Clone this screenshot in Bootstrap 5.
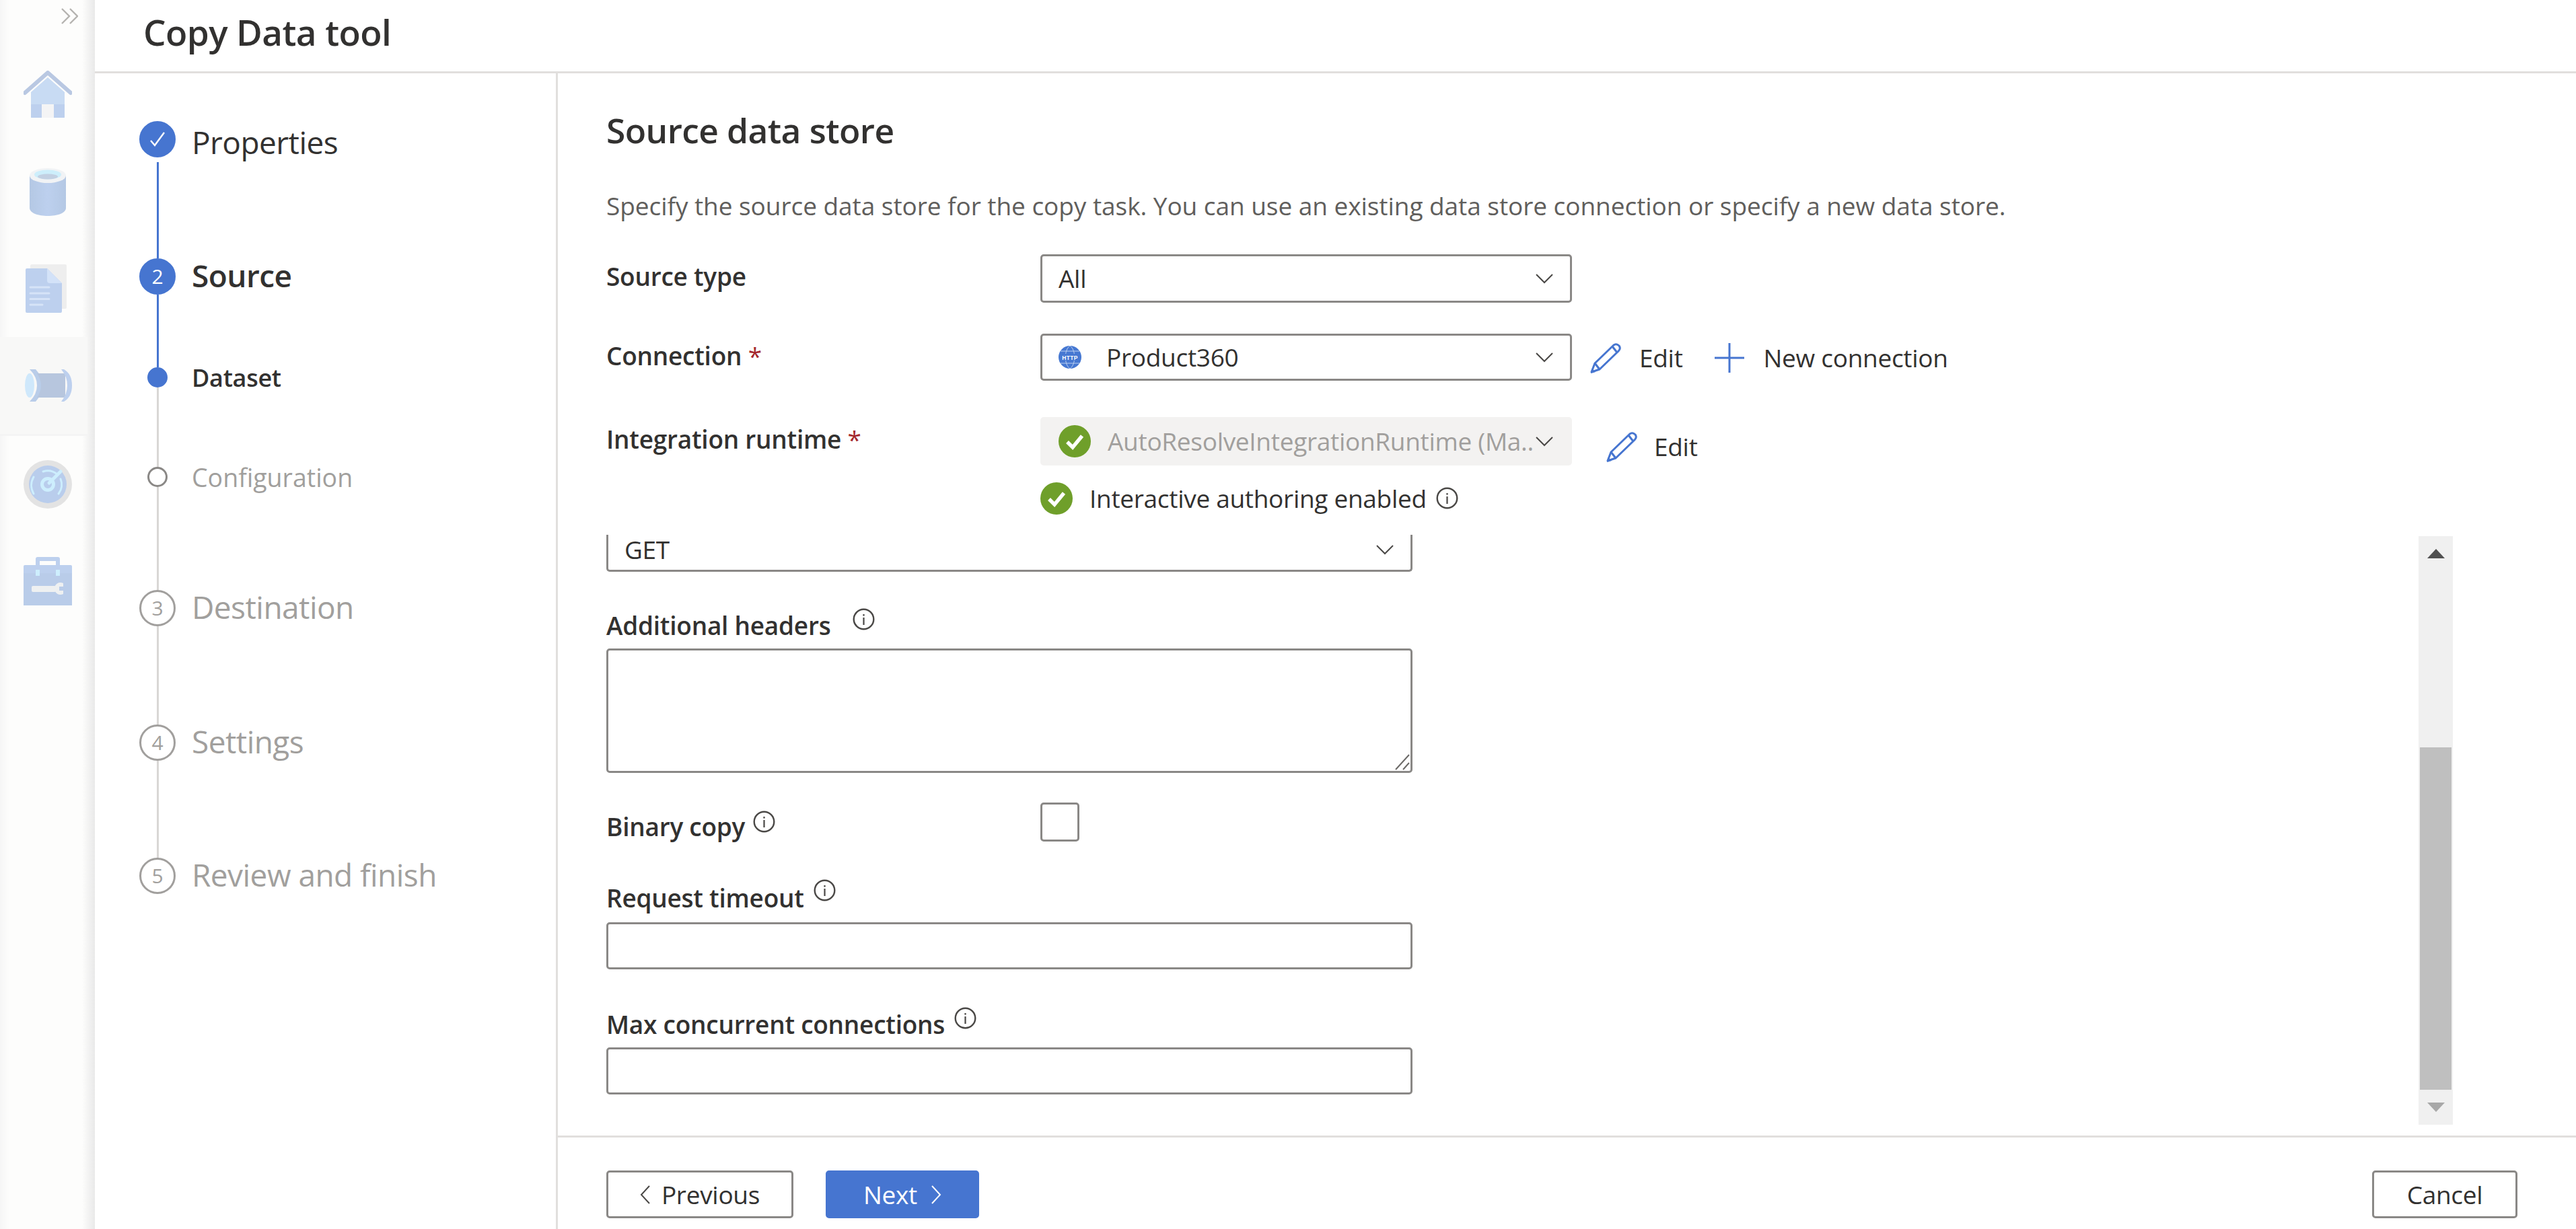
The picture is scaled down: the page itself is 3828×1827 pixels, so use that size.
<!DOCTYPE html>
<html lang="en">
<head>
<meta charset="utf-8">
<title>Copy Data tool</title>
<link href="https://cdn.jsdelivr.net/npm/bootstrap@5.3.0/dist/css/bootstrap.min.css" rel="stylesheet">
<style>
html,body{height:100%;margin:0;background:#fff;overflow:hidden}
body{font-family:"Open Sans","Noto Sans","Liberation Sans",sans-serif;color:#323130;font-size:37px;line-height:1.2}
.shell{height:1827px}
.siderail{width:141px;flex:none;padding-top:12px;background:linear-gradient(to right,#f6f6f6 0,#fdfdfc 14px,#fdfdfc 122px,#e9e9e9 141px)}
.collapse-ico{width:25px;height:24px;margin-left:91px;margin-bottom:33px;display:block;flex:none}
.rail-item{height:144px;flex:none;display:flex;align-items:center;justify-content:center}
.rail-sel{background:#f8f8f7;height:147px;margin-right:11px;padding-left:11px;border-bottom:3px solid #f4f4f4}
.rail-ico{width:72px;height:72px;display:block}
.mainpane{min-width:0}
.topbar{height:109px;border-bottom:3px solid #e1dfdd;padding:0 0 11px 72px}
.topbar h1{font-size:53px;font-weight:600;margin:0;color:#323130;letter-spacing:-.6px}
.wizard{width:688px;flex:none;border-right:3px solid #e1dfdd;padding:71px 0 0 66px}
.wstep{display:flex}
.wmark{width:54px;flex:none;display:flex;flex-direction:column;align-items:center}
.wcirc{width:54px;height:54px;border-radius:50%;flex:none;display:flex;align-items:center;justify-content:center;font-size:30px;font-weight:400;background:#fff;border:3px solid #a19f9d;color:#a19f9d}
.wcirc.on{background:#4675d0;border-color:#4675d0;color:#fff}
.wdot{width:30px;height:30px;border-radius:50%;flex:none;background:#fff;border:3px solid #8a8886}
.wdot.on{background:#4675d0;border-color:#4675d0}
.wline{width:3px;flex:1 1 auto;background:#d9d7d5}
.wline.on{background:#4675d0}
.wline.gap{margin-top:7px}
.wname{margin-left:24px;font-size:46px;line-height:54px;color:#323130;padding-top:4px;letter-spacing:-.55px}
.wname.strong{font-weight:600;padding-top:0;margin-top:-2px}
.wname.off{color:#a19f9d;padding-top:0;margin-top:-2px}
.wsub{margin-left:24px;font-size:36px;line-height:30px;padding-top:1px;letter-spacing:-.3px}
.wsub.strong{font-weight:600;color:#323130}
.wsub.off{color:#a19f9d;font-size:37.5px;letter-spacing:0}
.h-s1{height:204px}.h-s2{height:162px}.h-s3{height:148px}.h-s4{height:183px}.h-s5{height:200px}.h-s6{height:198px}
.pane{min-width:0}
.paneform{padding:53px 0 0 72px;height:686px;flex:none}
.paneform h2{font-size:51.5px;font-weight:600;margin:0;line-height:62px;color:#323130;letter-spacing:-.6px}
.descr{font-size:37px;line-height:46px;color:#605e5c;margin:59px 0 0;letter-spacing:-.05px;white-space:nowrap}
.frow{display:flex;align-items:flex-start}
.flabel{width:645px;flex:none;font-size:37px;line-height:66px;font-weight:600;color:#323130;letter-spacing:-.25px}
.req{color:#a4262c;font-weight:400}
.row-a{margin-top:49px;height:72px}
.row-b{margin-top:46px;height:70px}
.row-c{margin-top:54px;height:72px}
.row-d{margin-top:25px;padding-left:645px;height:48px}
.form-select.fake,.form-control.fake{background-image:none;border:3px solid #8a8886;border-radius:5px;color:#323130;font-size:37px;padding:0 24px;box-shadow:none}
.form-select.fake{display:flex;align-items:center;justify-content:space-between;letter-spacing:-.3px}
.pick{width:790px;height:72px;flex:none}
.pick.h70{height:70px}
.pick.dis{background:#f3f2f1;border-color:#f3f2f1;color:#a19f9d}
.chev{width:28px;height:16px;flex:none}
.act{color:#323130;letter-spacing:-.3px}
.act-a{margin-left:26px}
.ico-edit{width:47px;height:47px;flex:none}
.ico-plus{width:44px;height:44px;flex:none}
.ico-check{width:48px;height:48px;flex:none}
.ico-info{width:33px;height:33px;flex:none}
.ico-http{width:34px;height:34px;flex:none}
.scrollzone{height:877px;flex:none;padding:0 183px 0 72px}
.scrollbody{width:1198px}
.form-select.fake.getsel{height:55px;padding-bottom:8px;border-top:0;border-radius:0 0 5px 5px}
.stack-label{font-size:37px;font-weight:600;color:#323130;letter-spacing:-.25px}
.lab-h{display:flex;align-items:flex-start}
.fake-area{height:185px;width:1198px;resize:none;position:relative}
.fake-input{height:70px;width:1198px}
.grip{position:absolute;right:1px;bottom:1px;width:22px;height:24px}
.form-box{width:58px;height:58px;border:3px solid #8a8886;border-radius:5px;background:#fff;margin:0 495px 0 auto;flex:none}
.vbar{width:51px;height:875px;margin-top:2px;background:#f0f0f0;padding:0 2px;display:flex;flex-direction:column;align-items:stretch}
.vbtn{height:52px;display:flex;align-items:center;justify-content:center;flex:none}
.vgap{height:262px;flex:none}
.vthumb{height:509px;background:#bfbfbf;flex:none}
.arrow-up{width:0;height:0;border-left:13px solid transparent;border-right:13px solid transparent;border-bottom:14px solid #505050}
.arrow-dn{width:0;height:0;border-left:13px solid transparent;border-right:13px solid transparent;border-top:14px solid #a8a8a8}
.footerbar{border-top:3px solid #e1dfdd;margin-top:16px;padding:49px 87px 0 72px}
.btn.wbtn{height:71px;font-size:37px;border-radius:5px;padding:0;display:flex;align-items:center;justify-content:center;letter-spacing:-.3px;line-height:1}
.btn.ghost{border:3px solid #8a8886;background:#fff;color:#323130}
.btn.solid{background:#4675d0;border:3px solid #4675d0;color:#fff}
.w-prev{width:278px}.w-next{width:228px}.w-cancel{width:216px}
.chev-lr{width:16px;height:30px;flex:none}
</style>
</head>
<body>
<svg width="0" height="0" class="position-absolute">
<defs>
<symbol id="i-info" viewBox="0 0 33 33"><circle cx="16.5" cy="16.5" r="14.8" fill="none" stroke="#4a4846" stroke-width="2.4"/><rect x="15.4" y="14" width="2.2" height="11" fill="#4a4846"/><rect x="15.4" y="9" width="2.2" height="2.6" fill="#4a4846"/></symbol>
<symbol id="i-edit" viewBox="0 0 47 47"><path d="M3 44 L8 31 L36 4 Q40 1 44 5 Q47 9 43 13 L15 40 Z" fill="none" stroke="#4675d0" stroke-width="3" stroke-linejoin="round"/><path d="M8 31 L15 40 M34 6 L41 15" stroke="#4675d0" stroke-width="3" fill="none"/><path d="M2 46 L4 39 L9 44 Z" fill="#4675d0"/></symbol>
<symbol id="i-check" viewBox="0 0 48 48"><circle cx="24" cy="24" r="24" fill="#6f9f2a"/><path d="M13 25 L21 33 L35 16" fill="none" stroke="#fff" stroke-width="5.5"/></symbol>
<symbol id="i-chev" viewBox="0 0 28 16"><path d="M2 2 L14 14 L26 2" fill="none" stroke="#4a4846" stroke-width="2"/></symbol>
</defs>
</svg>
<div class="shell d-flex">
  <aside class="siderail d-flex flex-column">
    <svg class="collapse-ico" viewBox="0 0 25 24"><path d="M1 1 L12 12 L1 23 M13 1 L24 12 L13 23" fill="none" stroke="#b5b3b0" stroke-width="2.4"/></svg>
    <div class="rail-item"><svg class="rail-ico" viewBox="0 0 72 72"><path d="M11 32 L36 10 L61 32 V69 Q61 70 60 70 H12 Q11 70 11 69Z" fill="#c8dbf3"/><path d="M11 50H61V69Q61 70 60 70H12Q11 70 11 69Z" fill="#bdd0ee"/><rect x="27" y="50" width="18" height="20" fill="#f4f4f5"/><path d="M2 33 L36 3 L70 33" fill="none" stroke="#b9c8e2" stroke-width="6" stroke-linecap="round" stroke-linejoin="round"/></svg></div>
    <div class="rail-item"><svg class="rail-ico" viewBox="0 0 72 72"><defs><linearGradient id="g1" x1="0" x2="1"><stop offset="0" stop-color="#b4c8e4"/><stop offset=".5" stop-color="#bdd0ee"/><stop offset="1" stop-color="#b4c8e4"/></linearGradient></defs><path d="M9 12 V60 C9 68 22 72 36 72 C50 72 63 68 63 60 V12Z" fill="url(#g1)"/><ellipse cx="36" cy="12" rx="27" ry="11" fill="#f1f3f5"/><ellipse cx="36" cy="10.5" rx="20" ry="7" fill="#cdeefb"/><ellipse cx="36" cy="13.5" rx="15" ry="4" fill="#c2d0e2"/></svg></div>
    <div class="rail-item"><svg class="rail-ico" viewBox="0 0 72 72"><rect x="10" y="0" width="54" height="66" rx="2" fill="#eeeeee"/><path d="M3 8 Q3 6 5 6 H35 L57 28 V70 Q57 72 55 72 H5 Q3 72 3 70Z" fill="#bdd0ee"/><path d="M35 6 L57 28 H39 Q35 28 35 24Z" fill="#d3e2f8"/><path d="M10 34H38M10 43H38M10 51.500H38M10 60H28" stroke="#d6e3f7" stroke-width="3" stroke-linecap="round"/></svg></div>
    <div class="rail-item rail-sel"><svg class="rail-ico" viewBox="0 0 72 54"><path d="M9 3 H18 Q28 14 28 27 Q28 40 18 51 H9 Q20 40 20 27 Q20 14 9 3Z" fill="#b9cde9"/><path d="M20 9 H60 Q62 9 62 11 V43 Q62 45 60 45 H20 Q26 36 26 27 Q26 18 20 9Z" fill="#b7c6de"/><path d="M56 3 H60 Q72 10 72 27 Q72 44 60 51 H56 Q65 40 65 27 Q65 14 56 3Z" fill="#bdd0ee"/><ellipse cx="9" cy="27" rx="7" ry="18" fill="#cfe8fb"/></svg></div>
    <div class="rail-item"><svg class="rail-ico" viewBox="0 0 72 72"><circle cx="36" cy="36" r="36" fill="#e3e3e3"/><circle cx="36" cy="36" r="28" fill="#b9cdec"/><path d="M15 50 A25 25 0 0 1 15 25 M29 17 A22 22 0 0 1 50 21 M55 28 A22 22 0 0 1 52 50" fill="none" stroke="#cdeefd" stroke-width="3" stroke-linecap="round"/><path d="M38 34 L55 17" stroke="#cdeefd" stroke-width="5" stroke-linecap="round"/><circle cx="36" cy="36" r="8.500" fill="none" stroke="#cdeefd" stroke-width="5"/></svg></div>
    <div class="rail-item"><svg class="rail-ico" viewBox="0 0 72 72"><path d="M18 12 V3 Q18 0 21 0 H51 Q54 0 54 3 V12 H48 V6 H24 V12Z" fill="#bdd0ee"/><path d="M0 14 Q0 12 2 12 H70 Q72 12 72 14 V72 H2 Q0 72 0 70Z" fill="#bdd0ee"/><rect x="0" y="24" width="72" height="48" fill="#b9cce9"/><rect x="18" y="19" width="6" height="9" fill="#cdeefd"/><rect x="48" y="19" width="6" height="9" fill="#cdeefd"/><rect x="12" y="43" width="36" height="9" rx="2" fill="#eef0f1"/><path d="M59 39 A9 9 0 1 0 59 55 V50 H53 V44 H59Z" fill="#eef0f1"/></svg></div>
  </aside>
  <div class="mainpane flex-grow-1 d-flex flex-column">
    <header class="topbar d-flex align-items-center"><h1>Copy Data tool</h1></header>
    <div class="flex-grow-1 d-flex" style="min-height:0">
      <nav class="wizard">
        <div class="wstep h-s1"><div class="wmark"><div class="wcirc on"><svg width="26" height="26" viewBox="0 0 26 26"><path d="M3 15 L9 22 L23 3" fill="none" stroke="#fff" stroke-width="2.400"/></svg></div><div class="wline on gap"></div></div><div class="wname">Properties</div></div>
        <div class="wstep h-s2"><div class="wmark"><div class="wcirc on">2</div><div class="wline on"></div></div><div class="wname strong">Source</div></div>
        <div class="wstep h-s3"><div class="wmark"><div class="wdot on"></div><div class="wline"></div></div><div class="wsub strong">Dataset</div></div>
        <div class="wstep h-s4"><div class="wmark"><div class="wdot"></div><div class="wline"></div></div><div class="wsub off">Configuration</div></div>
        <div class="wstep h-s5"><div class="wmark"><div class="wcirc">3</div><div class="wline"></div></div><div class="wname off">Destination</div></div>
        <div class="wstep h-s6"><div class="wmark"><div class="wcirc">4</div><div class="wline"></div></div><div class="wname off">Settings</div></div>
        <div class="wstep"><div class="wmark"><div class="wcirc">5</div></div><div class="wname off">Review and finish</div></div>
      </nav>
      <section class="pane flex-grow-1 d-flex flex-column">
        <div class="paneform">
          <h2>Source data store</h2>
          <p class="descr">Specify the source data store for the copy task. You can use an existing data store connection or specify a new data store.</p>
          <div class="frow row-a"><div class="flabel">Source type</div><div class="form-select fake pick"><span>All</span><svg class="chev"><use href="#i-chev"/></svg></div></div>
          <div class="frow row-b"><div class="flabel">Connection <span class="req">*</span></div><div class="form-select fake pick h70"><span class="d-flex align-items-center" style="gap:37px"><svg class="ico-http" viewBox="0 0 34 34"><circle cx="17" cy="17" r="17" fill="#4678d2"/><path d="M3 8 H31 M3 26 H31 M17 0 C8 6 8 28 17 34 M17 0 C26 6 26 28 17 34" fill="none" stroke="#bcd0f0" stroke-width="1"/><rect x="4" y="12" width="26" height="10" fill="#4678d2"/><text x="17" y="20.500" text-anchor="middle" fill="#fff" font-family="Liberation Sans" font-weight="700" font-size="8.500" letter-spacing=".3">HTTP</text></svg><span>Product360</span></span><svg class="chev"><use href="#i-chev"/></svg></div>
            <div class="act act-a d-flex align-items-center" style="height:56px;margin-top:8px"><svg class="ico-edit"><use href="#i-edit"/></svg><span style="margin-left:27px">Edit</span><svg class="ico-plus" style="margin-left:47px"><path d="M22 0V44M0 22H44" stroke="#4675d0" stroke-width="3"/></svg><span style="margin-left:29px">New connection</span></div></div>
          <div class="frow row-c"><div class="flabel">Integration runtime <span class="req">*</span></div><div class="form-select fake pick dis"><span class="d-flex align-items-center" style="min-width:0"><svg class="ico-check"><use href="#i-check"/></svg><span class="text-nowrap" style="margin-left:25px">AutoResolveIntegrationRuntime (Ma..</span></span><svg class="chev"><use href="#i-chev"/></svg></div>
            <div class="act d-flex align-items-center" style="margin-left:50px;height:60px;margin-top:14px"><svg class="ico-edit"><use href="#i-edit"/></svg><span style="margin-left:25px">Edit</span></div></div>
          <div class="frow row-d align-items-center"><svg class="ico-check"><use href="#i-check"/></svg><span class="act" style="margin-left:25px">Interactive authoring enabled</span><svg class="ico-info" style="margin-left:14px;margin-top:-2px"><use href="#i-info"/></svg></div>
        </div>
        <div class="scrollzone d-flex justify-content-between">
          <div class="scrollbody">
            <div class="form-select fake getsel"><span>GET</span><svg class="chev"><use href="#i-chev"/></svg></div>
            <div class="lab-h stack-label" style="margin-top:58px;height:56px"><span>Additional headers</span><svg class="ico-info" style="margin-left:33px;margin-top:-4px"><use href="#i-info"/></svg></div>
            <div class="form-control fake fake-area"><svg class="grip" viewBox="0 0 22 24"><path d="M1 23 L21 1 M12 23 L21 13" stroke="#6b6967" stroke-width="2"/></svg></div>
            <div class="frow stack-label align-items-start" style="margin-top:44px;height:58px"><span style="margin-top:14px">Binary copy</span><svg class="ico-info" style="margin-left:12px;margin-top:12px"><use href="#i-info"/></svg><span class="form-box"></span></div>
            <div class="lab-h stack-label" style="margin-top:62px;height:58px"><span>Request timeout</span><svg class="ico-info" style="margin-left:14px;margin-top:-6px"><use href="#i-info"/></svg></div>
            <div class="form-control fake fake-input"></div>
            <div class="lab-h stack-label" style="margin-top:60px;height:56px"><span>Max concurrent connections</span><svg class="ico-info" style="margin-left:14px;margin-top:-4px"><use href="#i-info"/></svg></div>
            <div class="form-control fake fake-input"></div>
          </div>
          <div class="vbar"><div class="vbtn"><span class="arrow-up"></span></div><div class="vgap"></div><div class="vthumb"></div><div class="vbtn"><span class="arrow-dn"></span></div></div>
        </div>
        <footer class="footerbar d-flex justify-content-between">
          <div class="d-flex" style="gap:48px">
            <button class="btn wbtn ghost w-prev" style="gap:16px"><svg class="chev-lr" viewBox="0 0 16 30"><path d="M14 2 L2 15 L14 28" fill="none" stroke="#4a4846" stroke-width="2"/></svg><span>Previous</span></button>
            <button class="btn wbtn solid w-next"><span>Next</span><svg class="chev-lr" style="margin-left:20px" viewBox="0 0 16 30"><path d="M2 2 L14 15 L2 28" fill="none" stroke="#fff" stroke-width="2"/></svg></button>
          </div>
          <button class="btn wbtn ghost w-cancel">Cancel</button>
        </footer>
      </section>
    </div>
  </div>
</div>
</body>
</html>
